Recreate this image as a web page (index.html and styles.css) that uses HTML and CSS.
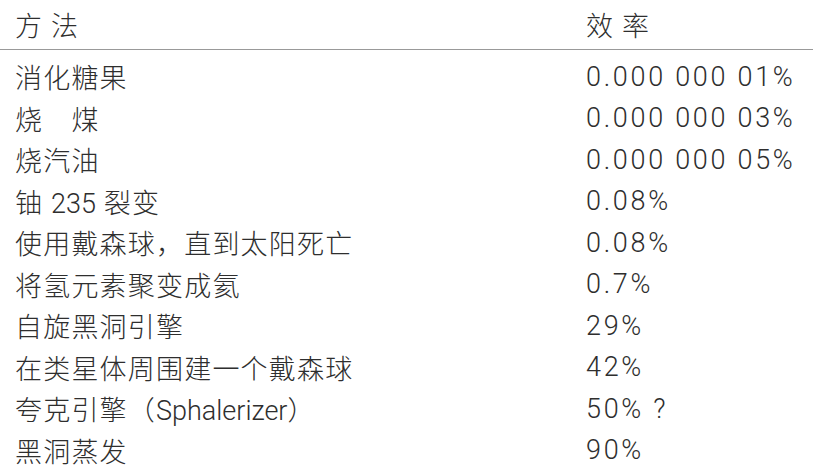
FILE: index.html
```html
<!DOCTYPE html>
<html lang="zh-CN">
<head>
<meta charset="utf-8">
<title>效率</title>
<link rel="stylesheet" href="styles.css">
</head>
<body>
<div class="table">
  <div class="row head"><span>方 法</span><span>效 率</span></div>
  <div class="rows">
    <div class="row"><span>消化糖果</span><span class="val">0.000 000 01%</span></div>
    <div class="row"><span>烧　煤</span><span class="val">0.000 000 03%</span></div>
    <div class="row"><span>烧汽油</span><span class="val">0.000 000 05%</span></div>
    <div class="row"><span>铀 <span class="latin">235</span> 裂变</span><span class="val">0.08%</span></div>
    <div class="row"><span>使用戴森球，直到太阳死亡</span><span class="val">0.08%</span></div>
    <div class="row"><span>将氢元素聚变成氦</span><span class="val">0.7%</span></div>
    <div class="row"><span>自旋黑洞引擎</span><span class="val">29%</span></div>
    <div class="row"><span>在类星体周围建一个戴森球</span><span class="val">42%</span></div>
    <div class="row"><span>夸克引擎（<span class="latin">Sphalerizer</span>）</span><span class="val">50% ?</span></div>
    <div class="row"><span>黑洞蒸发</span><span class="val">90%</span></div>
  </div>
</div>
</body>
</html>
```

FILE: styles.css
```css
html, body {
  margin: 0;
  padding: 0;
  background: #ffffff;
}
body {
  font-family: Roboto, "Noto Sans CJK SC", sans-serif;
  font-weight: 300;
  font-size: 27px;
  letter-spacing: 1.2px;
  color: #2e2e2e;
}
.table {
  display: flex;
  flex-direction: column;
}
.row {
  display: grid;
  grid-template-columns: 571px 1fr;
  padding-left: 15px;
  align-items: center;
  height: 41.5px;
  white-space: nowrap;
}
.head {
  height: 50px;
  border-bottom: 1px solid #999999;
  box-sizing: border-box;
}
.rows {
  display: flex;
  flex-direction: column;
  padding-top: 6px;
}
.val {
  letter-spacing: 2.7px;
}
.latin {
  letter-spacing: 0;
}
```
